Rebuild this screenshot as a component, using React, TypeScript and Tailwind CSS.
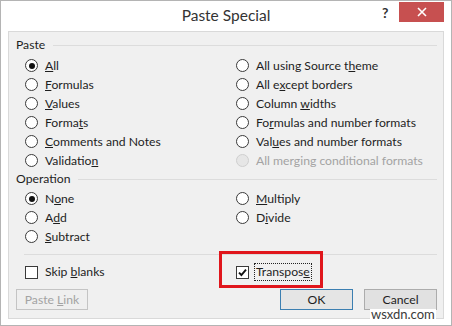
import React from 'react';

function Radio({ checked, disabled, children }: { checked?: boolean; disabled?: boolean; children: React.ReactNode }) {
  return (
    <div className="flex h-[19px] items-center gap-[7px]">
      <span
        className={
          'flex h-[13px] w-[13px] shrink-0 items-center justify-center rounded-full border ' +
          (disabled ? 'border-[#cfcfcf] bg-[#e6e6e6]' : 'border-[#3a3a3a] bg-white')
        }
      >
        {checked && <span className="h-[6px] w-[6px] rounded-full bg-[#111]" />}
      </span>
      <span className={disabled ? 'text-[#a3a3a3]' : 'text-[#1e1e1e]'}>{children}</span>
    </div>
  );
}

function Check({ checked }: { checked?: boolean }) {
  return (
    <span className="flex h-[13px] w-[13px] shrink-0 items-center justify-center border border-[#3a3a3a] bg-white">
      {checked && (
        <svg width="9" height="9" viewBox="0 0 9 9">
          <path d="M1 4.6 L3.4 7 L8 1.6" fill="none" stroke="#111" strokeWidth="1.9" />
        </svg>
      )}
    </span>
  );
}

function GroupTitle({ label }: { label: string }) {
  return (
    <div className="flex h-[16px] items-center gap-[8px] pl-[7px] pr-[6px]">
      <span className="text-[#1e1e1e]">{label}</span>
      <span className="h-px flex-1 bg-[#dcdcdc]" />
    </div>
  );
}

export default function App() {
  return (
    <div className="relative flex h-[326px] w-[452px] flex-col border border-[#b4b4b4] bg-white font-['Lato',sans-serif] text-[12.2px] leading-[16px]">
      {/* title bar */}
      <div className="relative flex h-[30px] items-center justify-center">
        <span className="pb-[2px] text-[15.5px] text-[#333]">Paste Special</span>
        <span className="absolute left-[381px] top-[4px] text-[14px] font-bold text-[#333]">?</span>
        <div className="absolute left-[398px] top-[1px] flex h-[20px] w-[45px] items-center justify-center bg-[#c75050]">
          <svg width="10" height="10" viewBox="0 0 10 10">
            <path d="M1 1 L9 9 M9 1 L1 9" stroke="#fff" strokeWidth="1.6" />
          </svg>
        </div>
      </div>

      {/* main panel */}
      <div className="mx-[7px] flex flex-col border border-[#d9d9d9] bg-[#f0f0f0] pt-[5px] pb-[8px]">
        <GroupTitle label="Paste" />
        <div className="mt-[3px] flex pl-[16px]">
          <div className="w-[211px]">
            <Radio checked><u>A</u>ll</Radio>
            <Radio><u>F</u>ormulas</Radio>
            <Radio><u>V</u>alues</Radio>
            <Radio>Forma<u>t</u>s</Radio>
            <Radio><u>C</u>omments and Notes</Radio>
            <Radio>Validatio<u>n</u></Radio>
          </div>
          <div>
            <Radio>All using Source t<u>h</u>eme</Radio>
            <Radio>All e<u>x</u>cept borders</Radio>
            <Radio>Column <u>w</u>idths</Radio>
            <Radio>Fo<u>r</u>mulas and number formats</Radio>
            <Radio>Val<u>u</u>es and number formats</Radio>
            <Radio disabled>All mer<u>g</u>ing conditional formats</Radio>
          </div>
        </div>

        <div className="mt-px">
          <GroupTitle label="Operation" />
        </div>
        <div className="mt-[2px] flex pl-[16px]">
          <div className="w-[211px]">
            <Radio checked>N<u>o</u>ne</Radio>
            <Radio>A<u>d</u>d</Radio>
            <Radio><u>S</u>ubtract</Radio>
          </div>
          <div>
            <Radio><u>M</u>ultiply</Radio>
            <Radio>D<u>i</u>vide</Radio>
          </div>
        </div>

        <div className="ml-[15px] mr-[6px] mt-[8px] h-px bg-[#dcdcdc]" />

        <div className="mt-[7px] flex h-[20px] items-center pl-[16px]">
          <div className="flex w-[211px] items-center gap-[7px]">
            <Check />
            <span className="text-[#1e1e1e]">Skip <u>b</u>lanks</span>
          </div>
          <div className="relative flex items-center gap-[5px]">
            <Check checked />
            <span className="border border-dotted border-[#222] px-px text-[#1e1e1e]">Transpos<u>e</u></span>
            <div className="absolute -left-[17px] -top-[12px] h-[37px] w-[104px] border-[3px] border-[#e0161c]" />
          </div>
        </div>

        <div className="mt-[7px] flex h-[21px] items-stretch pl-[7px] pr-[6px] leading-[13px]">
          <div className="flex w-[72px] items-center justify-center border border-[#c4c4c4] bg-[#efefef] text-[#a3a3a3]">
            <span>Paste <u>L</u>ink</span>
          </div>
          <div className="flex-1" />
          <div className="flex w-[73px] items-center justify-center border border-[#3c7fb1] bg-[#e5e5e5] text-[#1e1e1e]">
            OK
          </div>
          <div className="ml-[11px] flex w-[73px] items-center justify-center border border-[#acacac] bg-[#e1e1e1] pb-px text-[#1e1e1e]">
            Cancel
          </div>
        </div>
      </div>

      {/* watermark */}
      <span className="absolute left-[369px] top-[308px] bg-white px-px text-[13px] leading-[11px] text-[#3a3a3a]">
        wsxdn.com
      </span>
    </div>
  );
}
